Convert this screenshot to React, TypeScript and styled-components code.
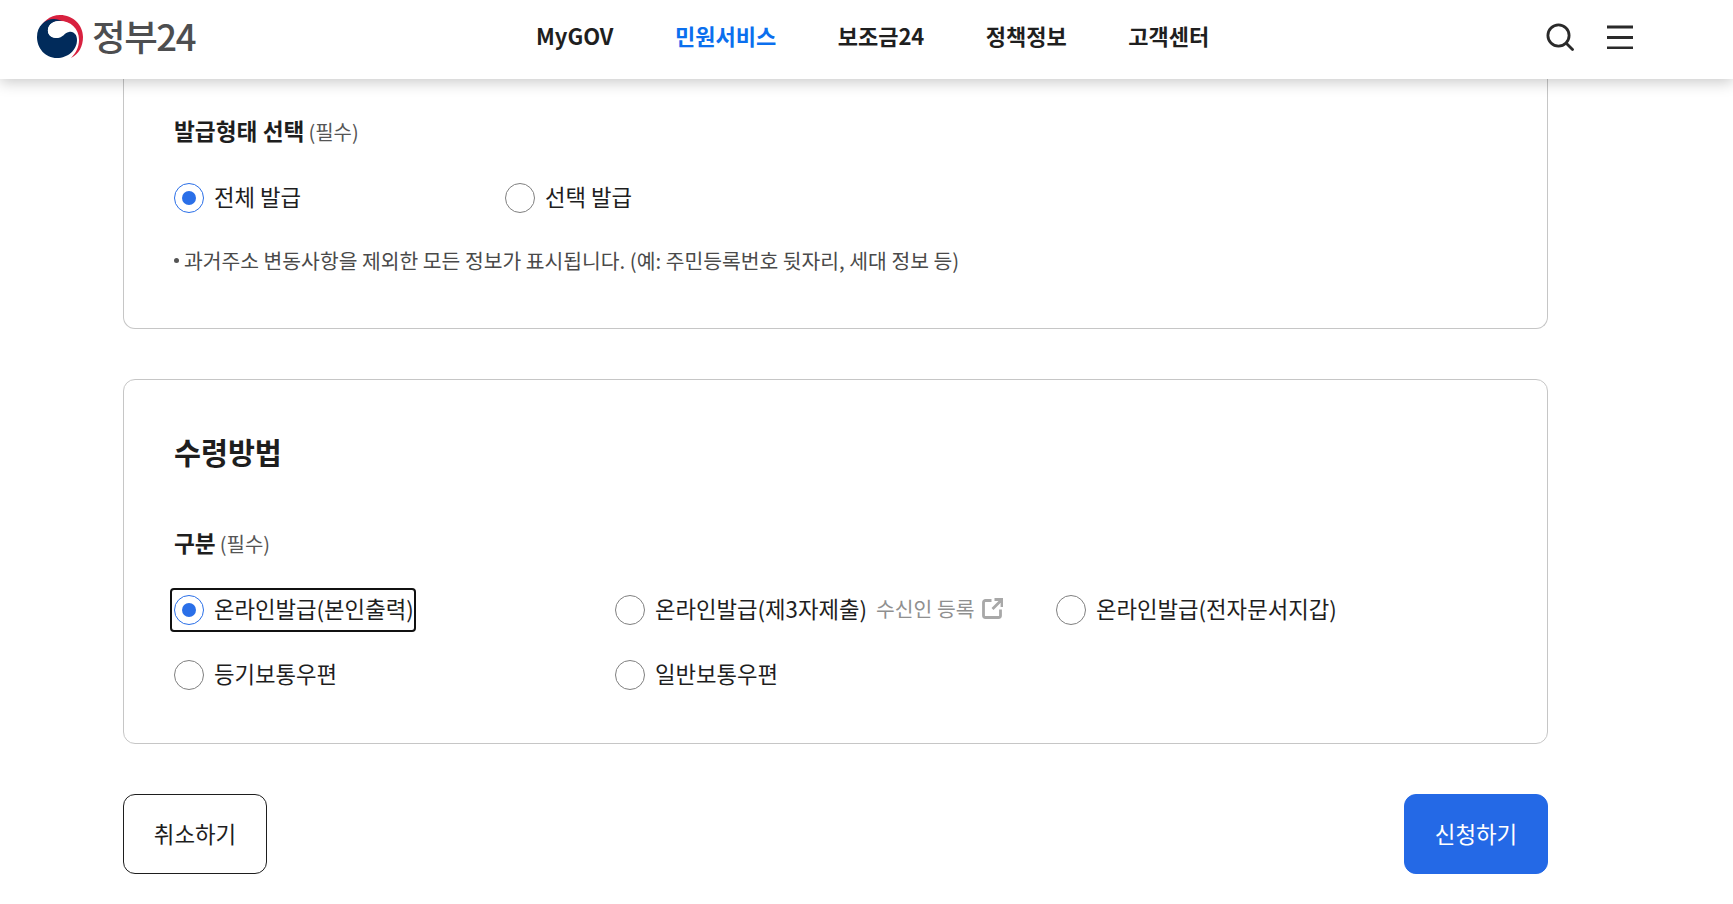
import React from "react";
import styled, { createGlobalStyle } from "styled-components";

const GlobalStyle = createGlobalStyle`
  html, body {
    margin: 0;
    padding: 0;
    background: #fff;
    font-family: "Noto Sans CJK KR", "Noto Sans", sans-serif;
    color: #1e1e1e;
  }
  * { box-sizing: border-box; }
`;

const Page = styled.div`
  height: 904px;
  overflow: hidden;
`;

const Header = styled.header`
  position: relative;
  z-index: 2;
  height: 79px;
  padding: 0 100px 6px 36px;
  display: flex;
  align-items: center;
  background: #fff;
  box-shadow: 0 3px 14px rgba(0, 0, 0, 0.22);
`;

const Logo = styled.a`
  width: 500px;
  display: flex;
  align-items: center;
  gap: 8px;
`;

const LogoText = styled.span`
  font-size: 36.500px;
  line-height: 1;
  font-weight: 500;
  letter-spacing: -1.4px;
  color: #4d4e50;
`;

const Nav = styled.nav`
  display: flex;
  gap: 61.5px;
  flex: 1;
  padding-bottom: 3px;
`;

const NavItem = styled.a<{ $active?: boolean }>`
  font-size: 22px;
  font-weight: 700;
  line-height: 1;
  color: ${(p) => (p.$active ? "#0b6fee" : "#1f1f1f")};
`;

const HeaderTools = styled.div`
  display: flex;
  align-items: center;
  gap: 33px;
`;

const Content = styled.main`
  width: 1425px;
  margin-left: 123px;
`;

const Card = styled.section<{ $cut?: boolean }>`
  border: 1px solid #c6c6c6;
  border-top-width: ${(p) => (p.$cut ? 0 : "1px")};
  border-radius: ${(p) => (p.$cut ? "0 0 12px 12px" : "12px")};
  padding: ${(p) => (p.$cut ? "37px 50px 53px" : "50px 50px 53px")};
  margin-bottom: 50px;
`;

const CardTitle = styled.h2`
  margin: 0 0 56px;
  font-size: 29.3px;
  line-height: 42px;
  font-weight: 700;
`;

const FieldLabel = styled.div`
  height: 32px;
  font-size: 22.7px;
  line-height: 30px;
  font-weight: 700;
  margin-bottom: 35px;
`;

const Required = styled.span`
  font-size: 20px;
  font-weight: 400;
  color: #555;
  margin-left: 4px;
`;

const RadioRow = styled.div`
  display: flex;
`;

const RadioGrid = styled.div`
  display: grid;
  grid-template-columns: repeat(3, 441px);
  row-gap: 35px;
`;

const RadioItem = styled.label<{ $width?: number; $focused?: boolean }>`
  position: relative;
  display: flex;
  align-items: center;
  gap: 10px;
  height: 30px;
  width: ${(p) => (p.$width ? `${p.$width}px` : "auto")};
  ${(p) =>
    p.$focused &&
    `
    &::after {
      content: "";
      box-sizing: border-box;
      position: absolute;
      left: -4px;
      top: -7px;
      width: 246px;
      height: 44px;
      border: 2.5px solid #111;
      border-radius: 4px;
    }
  `}
`;

const RadioMark = styled.span<{ $checked?: boolean }>`
  width: 30px;
  height: 30px;
  flex: none;
  border-radius: 50%;
  border: 1px solid ${(p) => (p.$checked ? "#2a6fe8" : "#808080")};
  display: flex;
  align-items: center;
  justify-content: center;
  &::after {
    content: "";
    width: 14px;
    height: 14px;
    border-radius: 50%;
    background: ${(p) => (p.$checked ? "#2a6fe8" : "transparent")};
  }
`;

const RadioText = styled.span`
  font-size: 22.3px;
  line-height: 30px;
  padding-bottom: 4px;
  white-space: nowrap;
  color: #1e1e1e;
`;

const Note = styled.p`
  margin: 32px 0 0;
  font-size: 20.4px;
  line-height: 30px;
  color: #4a4a4a;
  display: flex;
  align-items: center;
  gap: 5px;
  &::before {
    content: "";
    width: 5px;
    height: 5px;
    border-radius: 50%;
    background: #555;
  }
`;

const RecipientLink = styled.a`
  margin-left: -1px;
  padding-bottom: 4px;
  display: flex;
  align-items: center;
  gap: 8px;
  font-size: 20.4px;
  line-height: 30px;
  color: #8f8f8f;
  white-space: nowrap;
`;

const ButtonRow = styled.div`
  display: flex;
  justify-content: space-between;
`;

const Button = styled.button<{ $primary?: boolean }>`
  width: 144px;
  height: 80px;
  padding: 0 0 2px;
  border-radius: 12px;
  border: 1px solid ${(p) => (p.$primary ? "#2469e6" : "#1e1e1e")};
  background: ${(p) => (p.$primary ? "#2469e6" : "#fff")};
  color: ${(p) => (p.$primary ? "#fff" : "#1e1e1e")};
  font: inherit;
  font-size: 22.4px;
`;

function TaegeukLogo() {
  return (
    <svg width="48" height="46" viewBox="0 0 48 46" aria-hidden="true">
      <path
        d="M2 19C5 8 14 1 24 1c13 0 23 10 23 22 0 9-4 17-12 21 5-5 8-11 8-18C43 14 34 7 24 7 13 7 6 13 2 19z"
        fill="#d8213f"
      />
      <path
        d="M1 23C1 12 9 5 18 5c3 0 6 1 8 2-8-1-13 3-14 8-1 6 4 9 9 9 6 0 7-5 12-6 5-1 8 3 8 8 0 10-9 18-20 18C9 44 1 34 1 23z"
        fill="#012b5b"
      />
      <path
        d="M12 15c1-5 6-8 11-8 8 0 16 5 16 14 0-4-4-5-7-4-5 1-6 7-12 7-5 0-9-4-8-9z"
        fill="#fff"
      />
    </svg>
  );
}

function SearchIcon() {
  return (
    <svg width="28" height="28" viewBox="0 0 28 28" fill="none" stroke="#2a2a2a" strokeWidth="2.8" aria-hidden="true">
      <circle cx="12.5" cy="12.5" r="10.6" />
      <path d="M20.5 20.5L26.5 26.5" strokeLinecap="round" />
    </svg>
  );
}

function MenuIcon() {
  return (
    <svg width="26" height="24" viewBox="0 0 26 24" stroke="#2a2a2a" strokeWidth="3" aria-hidden="true">
      <path d="M0 2h26M0 12.500h26M0 23h26" />
    </svg>
  );
}

function ExternalIcon() {
  return (
    <svg width="21" height="21" viewBox="0 0 21 21" fill="none" stroke="#a8a8a8" strokeWidth="2.8" aria-hidden="true">
      <path d="M9.500 2.500H3.500a2 2 0 0 0-2 2v13a2 2 0 0 0 2 2h13a2 2 0 0 0 2-2v-6" />
      <path d="M12.500 1.500h7.500v7.500M20 1.500l-9.500 9.500" />
    </svg>
  );
}

function Radio({
  label,
  checked,
  focused,
  width,
  children,
}: {
  label: string;
  checked?: boolean;
  focused?: boolean;
  width?: number;
  children?: React.ReactNode;
}) {
  return (
    <RadioItem $width={width} $focused={focused}>
      <RadioMark $checked={checked} />
      <RadioText>{label}</RadioText>
      {children}
    </RadioItem>
  );
}

export default function App() {
  return (
    <Page>
      <GlobalStyle />
      <Header>
        <Logo>
          <TaegeukLogo />
          <LogoText>정부24</LogoText>
        </Logo>
        <Nav>
          <NavItem>MyGOV</NavItem>
          <NavItem $active>민원서비스</NavItem>
          <NavItem>보조금24</NavItem>
          <NavItem>정책정보</NavItem>
          <NavItem>고객센터</NavItem>
        </Nav>
        <HeaderTools>
          <SearchIcon />
          <MenuIcon />
        </HeaderTools>
      </Header>
      <Content>
        <Card $cut>
          <FieldLabel>
            발급형태 선택<Required>(필수)</Required>
          </FieldLabel>
          <RadioRow>
            <Radio label="전체 발급" checked width={331} />
            <Radio label="선택 발급" />
          </RadioRow>
          <Note>과거주소 변동사항을 제외한 모든 정보가 표시됩니다. (예: 주민등록번호 뒷자리, 세대 정보 등)</Note>
        </Card>
        <Card>
          <CardTitle>수령방법</CardTitle>
          <FieldLabel>
            구분<Required>(필수)</Required>
          </FieldLabel>
          <RadioGrid>
            <Radio label="온라인발급(본인출력)" checked focused />
            <Radio label="온라인발급(제3자제출)">
              <RecipientLink>
                수신인 등록
                <ExternalIcon />
              </RecipientLink>
            </Radio>
            <Radio label="온라인발급(전자문서지갑)" />
            <Radio label="등기보통우편" />
            <Radio label="일반보통우편" />
          </RadioGrid>
        </Card>
        <ButtonRow>
          <Button>취소하기</Button>
          <Button $primary>신청하기</Button>
        </ButtonRow>
      </Content>
    </Page>
  );
}
